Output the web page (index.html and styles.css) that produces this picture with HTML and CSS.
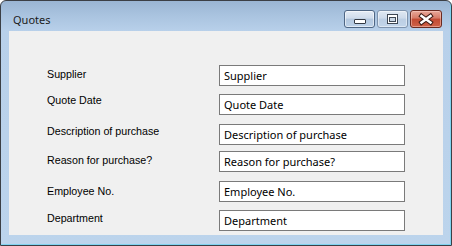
FILE: index.html
```html
<!DOCTYPE html>
<html>
<head>
<meta charset="utf-8">
<title>Quotes</title>
<link rel="stylesheet" href="styles.css">
</head>
<body>
<div class="window">
  <div class="titlebar">
    <span class="title">Quotes</span>
    <div class="caption-buttons">
      <div class="cb cb-min">
        <svg width="31" height="18" viewBox="0 0 31 18"><rect x="10.5" y="9.5" width="11" height="4" rx="0.5" fill="#fff" stroke="#333a44" stroke-width="1"/></svg>
      </div>
      <div class="cb cb-max">
        <svg width="31" height="18" viewBox="0 0 31 18"><rect x="10.5" y="4.5" width="10" height="9" fill="#fff" stroke="#3d4652" stroke-width="1"/><rect x="12.5" y="7.5" width="6" height="4" fill="#c9d6e4" stroke="#3d4652" stroke-width="1"/></svg>
      </div>
      <div class="cb cb-close">
        <svg width="32" height="18" viewBox="0 0 32 18"><path d="M11.5 6 L20.5 12.5 M20.5 6 L11.5 12.5" stroke="#3b1a14" stroke-width="4.5" stroke-linecap="square"/><path d="M11.5 6 L20.5 12.5 M20.5 6 L11.5 12.5" stroke="#fff" stroke-width="2.5" stroke-linecap="square"/></svg>
      </div>
    </div>
  </div>
  <div class="frame">
    <div class="client">
      <div class="form">
        <div class="row"><span class="label">Supplier</span><div class="box">Supplier</div></div>
        <div class="row"><span class="label">Quote Date</span><div class="box">Quote Date</div></div>
        <div class="row"><span class="label">Description of purchase</span><div class="box">Description of purchase</div></div>
        <div class="row"><span class="label">Reason for purchase?</span><div class="box">Reason for purchase?</div></div>
        <div class="row"><span class="label">Employee No.</span><div class="box">Employee No.</div></div>
        <div class="row"><span class="label">Department</span><div class="box">Department</div></div>
      </div>
    </div>
  </div>
</div>
</body>
</html>
```

FILE: styles.css
```css
* { box-sizing: border-box; }
html, body { margin: 0; padding: 0; background: #ffffff; }

.window {
  width: 452px;
  height: 246px;
  border: 1px solid #3b3f45;
  border-radius: 6px 6px 0 0;
  background: linear-gradient(to bottom, #9ab5d3 0px, #a9c3df 14px, #b8d0ea 30px, #bcd4ec 100%);
  display: flex;
  flex-direction: column;
  overflow: hidden;
  box-shadow: inset -1px -1px 0 #7fd3f0;
}

.titlebar {
  height: 30px;
  display: flex;
  justify-content: space-between;
  align-items: flex-start;
  flex: none;
}

.title {
  font-family: "Noto Sans", sans-serif;
  font-size: 11px;
  line-height: 16px;
  color: #1b1b1b;
  margin: 11px 0 0 12px;
}

.caption-buttons {
  display: flex;
  gap: 2px;
  margin: 9px 9px 0 0;
}

.cb {
  height: 18px;
  border: 1px solid #4e6684;
  border-radius: 3px;
  position: relative;
  overflow: hidden;
}
.cb svg { position: absolute; left: -1px; top: -1px; display: block; }

.cb-min {
  width: 31px;
  background: linear-gradient(to bottom, #e4ecf6 0%, #cfdcec 45%, #b4c8df 50%, #bcd1e8 100%);
  box-shadow: inset 0 0 0 1px rgba(255,255,255,0.55);
}
.cb-max {
  width: 31px;
  border-color: #7e93ad;
  background: linear-gradient(to bottom, #dfe8f2 0%, #cddaea 45%, #bccee3 50%, #c2d5ea 100%);
  box-shadow: inset 0 0 0 1px rgba(255,255,255,0.45);
}
.cb-close {
  width: 32px;
  border-color: #6a2a20;
  background: linear-gradient(to bottom, #e8a899 0%, #d67a66 45%, #c24a33 50%, #cf6248 100%);
  box-shadow: inset 0 0 0 1px rgba(255,220,210,0.45);
}

.frame {
  flex: 1;
  padding: 0 8px 10px 8px;
  display: flex;
}

.client {
  flex: 1;
  background: #f0f0f0;
}

.form {
  padding: 34px 0 0 38px;
  display: flex;
  flex-direction: column;
}

.row {
  display: grid;
  grid-template-columns: 172px 186px;
  height: 21px;
  align-items: start;
}
.row:nth-child(2) { margin-top: 8px; }
.row:nth-child(3) { margin-top: 9px; }
.row:nth-child(4) { margin-top: 6px; }
.row:nth-child(5) { margin-top: 9px; }
.row:nth-child(6) { margin-top: 8px; }

.label {
  font-family: "Liberation Sans", Arial, sans-serif;
  font-size: 10.7px;
  line-height: 13px;
  color: #000;
  padding-top: 2px;
  white-space: nowrap;
}
.row:nth-child(1) .label { padding-top: 3px; }
.row:nth-child(2) .label { padding-top: 0px; }
.row:nth-child(3) .label { padding-top: 1px; }
.row:nth-child(4) .label { padding-top: 3px; }
.row:nth-child(5) .label { padding-top: 4px; }
.row:nth-child(6) .label { padding-top: 2px; }

.box {
  height: 21px;
  border: 1px solid #7a7a7a;
  background: #ffffff;
  font-family: "Noto Sans", sans-serif;
  font-size: 11px;
  line-height: 19px;
  color: #000;
  padding-left: 4px;
  white-space: nowrap;
  overflow: hidden;
}
```
